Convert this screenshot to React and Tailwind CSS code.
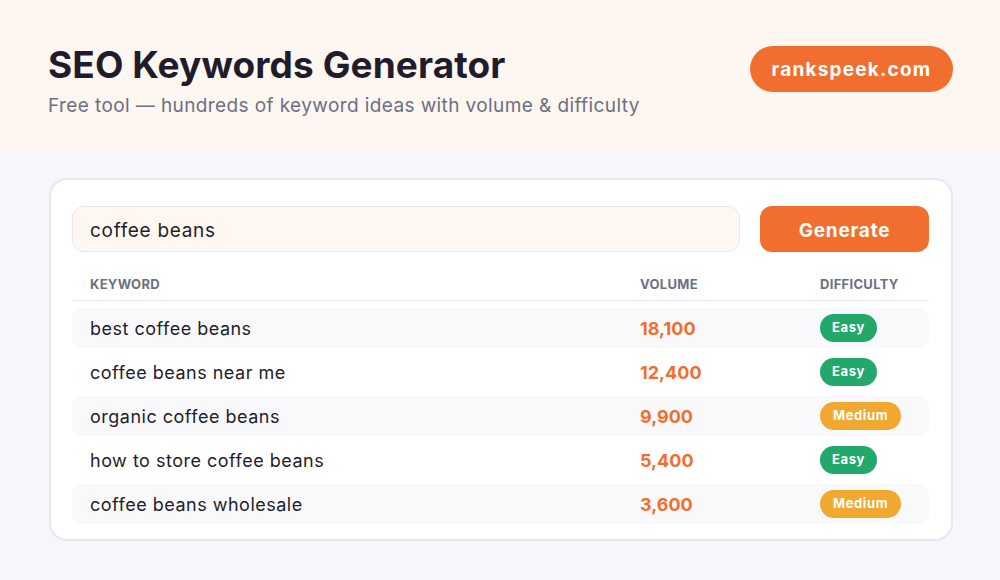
import React from 'react';

const rows = [
  { keyword: 'best coffee beans', volume: '18,100', difficulty: 'Easy' },
  { keyword: 'coffee beans near me', volume: '12,400', difficulty: 'Easy' },
  { keyword: 'organic coffee beans', volume: '9,900', difficulty: 'Medium' },
  { keyword: 'how to store coffee beans', volume: '5,400', difficulty: 'Easy' },
  { keyword: 'coffee beans wholesale', volume: '3,600', difficulty: 'Medium' },
];

const Badge = ({ level }) => {
  if (level === 'Easy') {
    return (
      <span className="inline-flex h-[28px] items-center rounded-full bg-[#22a86b] px-[12px] text-[13px] font-bold tracking-[0.6px] text-white">
        Easy
      </span>
    );
  }
  return (
    <span className="inline-flex h-[28px] items-center rounded-full bg-[#f0a830] px-[13px] text-[13px] font-bold tracking-[0.6px] text-white">
      Medium
    </span>
  );
};

const App = () => {
  return (
    <div
      className="min-h-[580px] w-[1000px] bg-[#f7f6fb] text-[#1f1d2b]"
      style={{ fontFamily: 'Inter, "Open Sans", sans-serif' }}
    >
      {/* header */}
      <header className="flex h-[151px] items-start justify-between bg-[#fef6f1] pl-[48px] pr-[47px] pt-[41px]">
        <div>
          <h1 className="text-[37px] font-bold leading-[48px] tracking-[0.1px] text-[#1f1d2b]">
            SEO Keywords Generator
          </h1>
          <p className="mt-[4px] text-[19px] leading-[26px] tracking-[0.4px] text-[#6b7083]">
            Free tool — hundreds of keyword ideas with volume &amp; difficulty
          </p>
        </div>
        <div className="mt-[5px] flex h-[46px] w-[203px] items-center justify-center rounded-full bg-[#f26e2e] pt-[2px] text-[19px] font-bold tracking-[1.2px] text-white">
          rankspeek.com
        </div>
      </header>

      <main className="pl-[49px] pr-[47px] pt-[27px]">
        <div className="rounded-[18px] border-2 border-[#e8e7f1] bg-white pb-[15px] pl-[21px] pr-[22px] pt-[26px]">
          <div className="flex gap-[20px]">
            <div className="flex h-[46px] flex-1 items-center rounded-[12px] border border-[#e8e6f0] bg-[#fff7f1] px-[17px] pt-[4px] text-[19px] tracking-[0.7px] text-[#1f1d2b]">
              coffee beans
            </div>
            <button className="h-[46px] w-[169px] rounded-[12px] bg-[#f26e2e] pt-[4px] text-[19px] font-bold tracking-[0.8px] text-white">
              Generate
            </button>
          </div>

          <div className="mt-[20px] grid h-[29px] grid-cols-[550px_180px_1fr] border-b border-[#e6e5ef] px-[18px] pt-[3px] text-[13px] font-bold uppercase tracking-[0.3px] text-[#6b7083]">
            <span>Keyword</span>
            <span>Volume</span>
            <span>Difficulty</span>
          </div>

          <div className="mt-[7px] flex flex-col gap-[4px]">
            {rows.map((row, i) => (
              <div
                key={row.keyword}
                className={
                  'grid h-[40px] grid-cols-[550px_180px_1fr] items-center rounded-[10px] px-[18px] ' +
                  (i % 2 === 0 ? 'bg-[#f9f9fc]' : 'bg-white')
                }
              >
                <span className="text-[18px] tracking-[0.5px] text-[#1f1d2b]">{row.keyword}</span>
                <span className="text-[18px] font-bold text-[#f26e2e]">{row.volume}</span>
                <span className="flex">
                  <Badge level={row.difficulty} />
                </span>
              </div>
            ))}
          </div>
        </div>
      </main>
    </div>
  );
};

export default App;
